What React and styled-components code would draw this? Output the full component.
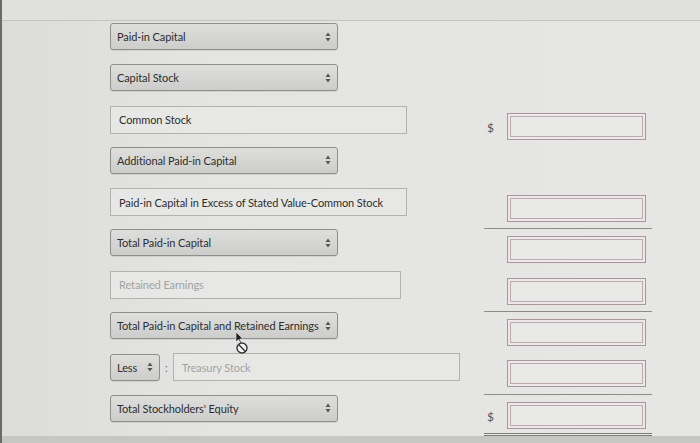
import React from 'react'
import styled, { createGlobalStyle } from 'styled-components'

const Global = createGlobalStyle`
  html, body { margin: 0; padding: 0; }
  body {
    width: 700px;
    height: 443px;
    overflow: hidden;
    background: #e2e3e1;
    font-family: Lato, "Open Sans", sans-serif;
  }
`

const Screen = styled.div`
  position: relative;
  width: 700px;
  height: 443px;
  display: flex;
  flex-direction: column;
  background: linear-gradient(90deg, #dcdddb 0%, #e4e5e3 30%, #e6e7e5 100%);
  border-left: 2px solid #6a6a6a;
  box-sizing: border-box;
`

const TopBar = styled.div`
  height: 20px;
  flex: none;
  background: #e0e1df;
  border-bottom: 1px solid #c4c5c3;
`

const Sheet = styled.div`
  flex: 1;
  display: flex;
  flex-direction: column;
  padding: 2px 0 0 108px;
`

const Row = styled.div`
  height: 41.3px;
  flex: none;
  display: grid;
  grid-template-columns: 374px 168px;
  align-items: start;
`

const Left = styled.div`
  display: flex;
  align-items: center;
  gap: 5px;
  padding-top: ${p => p.$offset || 0}px;
`

const Select = styled.div`
  box-sizing: border-box;
  width: ${p => p.$w || 228}px;
  height: 27px;
  display: flex;
  align-items: center;
  justify-content: space-between;
  padding: 0 6px 0 6px;
  border: 1px solid #8e8f8d;
  border-radius: 3px;
  background: linear-gradient(180deg, #dedfdd 0%, #cdcecc 100%);
  box-shadow: 0 1px 0 rgba(0, 0, 0, 0.08);
  font-size: 11px;
  color: #2e2e2e;
  letter-spacing: -0.1px;
`

const Input = styled.div`
  box-sizing: border-box;
  width: ${p => p.$w || 297}px;
  height: 28px;
  display: flex;
  align-items: center;
  padding: 0 8px;
  border: 1px solid #b2b3b1;
  background: #e7e8e6;
  font-size: 11px;
  color: ${p => (p.$placeholder ? '#a2a3a1' : '#2e2e2e')};
  letter-spacing: -0.1px;
`

const Colon = styled.span`
  font-size: 11px;
  color: #777;
`

const Right = styled.div`
  box-sizing: border-box;
  height: 41.3px;
  display: flex;
  align-items: flex-start;
  padding-top: 7px;
  border-bottom: ${p => (p.$rule === 'double' ? '3px double #7d7e7c' : p.$rule ? '1px solid #8a8c8a' : 'none')};
`

const Dollar = styled.span`
  width: 23px;
  flex: none;
  padding: 7px 0 0 3px;
  box-sizing: border-box;
  font-size: 12px;
  color: #555;
`

const AmountBox = styled.div`
  box-sizing: border-box;
  width: 139px;
  height: 27px;
  padding: 2px;
  border: 1px solid #a9959b;
  background: #ebe9e9;
`

const AmountInner = styled.div`
  width: 100%;
  height: 100%;
  box-sizing: border-box;
  border: 1px solid #bda9ae;
  background: #e9eae8;
`

const BottomBand = styled.div`
  height: 7px;
  flex: none;
  background: #c6c7c5;
`

const Cursor = styled.svg`
  position: absolute;
  left: 230px;
  top: 331px;
`

const Arrows = () => (
  <svg width="6" height="10" viewBox="0 0 6 10">
    <path d="M3 0.5 L5.5 4 L0.5 4 Z" fill="#555" />
    <path d="M3 9.5 L5.5 6 L0.5 6 Z" fill="#555" />
  </svg>
)

const Amount = ({ dollar }) => (
  <>
    <Dollar>{dollar ? '$' : ''}</Dollar>
    <AmountBox>
      <AmountInner />
    </AmountBox>
  </>
)

const rows = [
  { kind: 'select', label: 'Paid-in Capital' },
  { kind: 'select', label: 'Capital Stock' },
  { kind: 'input', label: 'Common Stock', amount: true, dollar: true },
  { kind: 'select', label: 'Additional Paid-in Capital' },
  { kind: 'input', label: 'Paid-in Capital in Excess of Stated Value-Common Stock', amount: true, rule: true },
  { kind: 'select', label: 'Total Paid-in Capital', amount: true },
  { kind: 'input', label: 'Retained Earnings', placeholder: true, w: 291, amount: true, rule: true },
  { kind: 'select', label: 'Total Paid-in Capital and Retained Earnings', amount: true },
  { kind: 'less', label: 'Treasury Stock', amount: true, rule: true },
  { kind: 'select', label: "Total Stockholders' Equity", amount: true, dollar: true, rule: 'double' },
]

export default function App () {
  return (
    <>
      <Global />
      <Screen>
        <TopBar />
        <Sheet>
          {rows.map((r, i) => (
            <Row key={i}>
              <Left>
                {r.kind === 'select' && (
                  <Select>
                    <span>{r.label}</span>
                    <Arrows />
                  </Select>
                )}
                {r.kind === 'input' && (
                  <Input $w={r.w} $placeholder={r.placeholder}>{r.label}</Input>
                )}
                {r.kind === 'less' && (
                  <>
                    <Select $w={50}>
                      <span>Less</span>
                      <Arrows />
                    </Select>
                    <Colon>:</Colon>
                    <Input $w={287} $placeholder>{r.label}</Input>
                  </>
                )}
              </Left>
              <Right $rule={r.rule}>
                {r.amount && <Amount dollar={r.dollar} />}
              </Right>
            </Row>
          ))}
        </Sheet>
        <BottomBand />
        <Cursor width="20" height="24" viewBox="0 0 20 24">
          <path d="M4 1 L4 11 L6.5 8.5 L8.5 12 L9.5 11.5 L7.8 8 L11 8 Z" fill="#222" stroke="#eee" strokeWidth="0.6" />
          <circle cx="10" cy="17" r="5" fill="#f2f2f2" stroke="#333" strokeWidth="1.4" />
          <path d="M6.6 13.6 L13.4 20.4" stroke="#333" strokeWidth="1.4" />
        </Cursor>
      </Screen>
    </>
  )
}
